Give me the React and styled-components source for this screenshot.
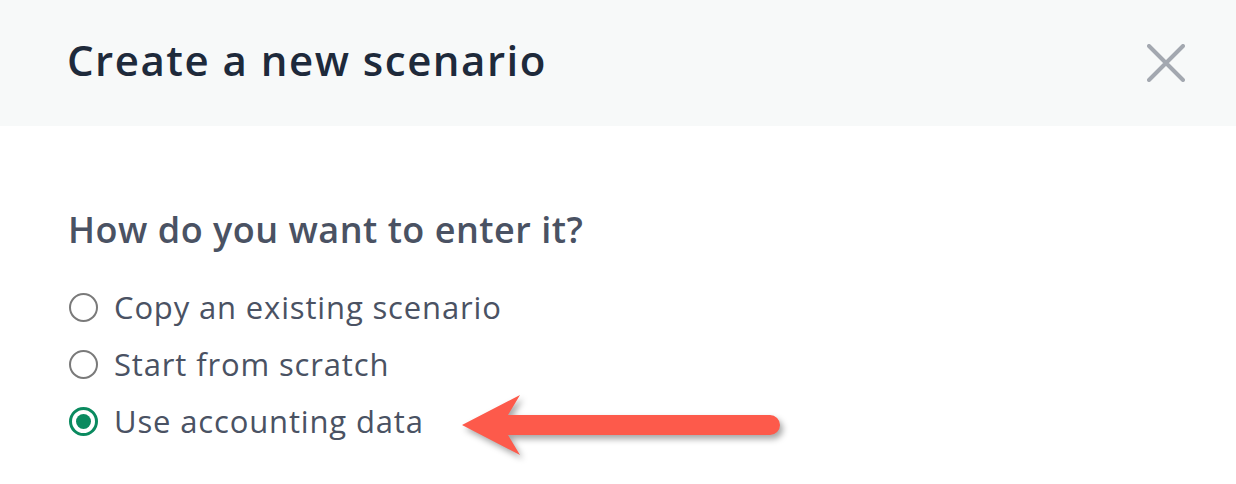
import React, { useState } from 'react';
import styled, { createGlobalStyle } from 'styled-components';

const GlobalStyle = createGlobalStyle`
  html, body {
    margin: 0;
    padding: 0;
    background: #ffffff;
    font-family: "Open Sans", Lato, sans-serif;
  }
`;

const Modal = styled.div`
  width: 1236px;
  height: 484px;
  background: #fff;
  overflow: hidden;
`;

const Header = styled.header`
  height: 126px;
  background: #f7f9f9;
  display: flex;
  align-items: center;
  justify-content: space-between;
  padding: 0 50px 0 67px;
  box-sizing: border-box;
`;

const Title = styled.h1`
  margin: 0 0 8px;
  font-size: 42px;
  font-weight: 600;
  color: #1e2a3b;
  letter-spacing: 1.5px;
`;

const CloseButton = styled.button`
  border: none;
  background: none;
  padding: 0;
  width: 40px;
  height: 40px;
  display: flex;
  align-items: center;
  justify-content: center;
  cursor: pointer;
`;

const Body = styled.section`
  padding: 82px 68px 0;
`;

const Question = styled.h2`
  margin: 0 0 34px;
  font-size: 36px;
  font-weight: 600;
  color: #4a5263;
  letter-spacing: 0.5px;
  line-height: 44px;
`;

const OptionList = styled.div`
  display: flex;
  flex-direction: column;
  gap: 15px;
`;

const Option = styled.label`
  display: flex;
  align-items: center;
  height: 42px;
  font-size: 31px;
  color: #4a5263;
  letter-spacing: 0.85px;
  cursor: pointer;
`;

const Radio = styled.span`
  width: 29px;
  height: 29px;
  box-sizing: border-box;
  border-radius: 50%;
  border: ${(p) => (p.$checked ? '3px solid #0a8a5f' : '2px solid #7a7a7a')};
  margin: 0 16px 0 1px;
  display: flex;
  align-items: center;
  justify-content: center;
  flex-shrink: 0;
  &::after {
    content: '';
    display: ${(p) => (p.$checked ? 'block' : 'none')};
    width: 15px;
    height: 15px;
    border-radius: 50%;
    background: #0a8a5f;
  }
`;

const Arrow = styled.svg`
  margin-left: 38px;
  margin-top: 8px;
  overflow: visible;
  filter: drop-shadow(3px 4px 3px rgba(0, 0, 0, 0.35));
`;

const options = ['Copy an existing scenario', 'Start from scratch', 'Use accounting data'];

export default function App() {
  const [selected, setSelected] = useState(2);

  return (
    <Modal>
      <GlobalStyle />
      <Header>
        <Title>Create a new scenario</Title>
        <CloseButton aria-label="Close">
          <svg width="38" height="38" viewBox="0 0 38 38">
            <path d="M2 2 L36 36 M36 2 L2 36" stroke="#a3a8b0" strokeWidth="4" strokeLinecap="round" />
          </svg>
        </CloseButton>
      </Header>
      <Body>
        <Question>How do you want to enter it?</Question>
        <OptionList>
          {options.map((label, i) => (
            <Option key={label} onClick={() => setSelected(i)}>
              <Radio $checked={selected === i} />
              {label}
              {i === 2 && (
                <Arrow width="320" height="60" viewBox="0 0 320 60">
                  <path d="M0 30 L58 0 L46 20 L308 20 A10 10 0 0 1 308 40 L46 40 L58 60 Z" fill="#fd5a4b" />
                </Arrow>
              )}
            </Option>
          ))}
        </OptionList>
      </Body>
    </Modal>
  );
}
